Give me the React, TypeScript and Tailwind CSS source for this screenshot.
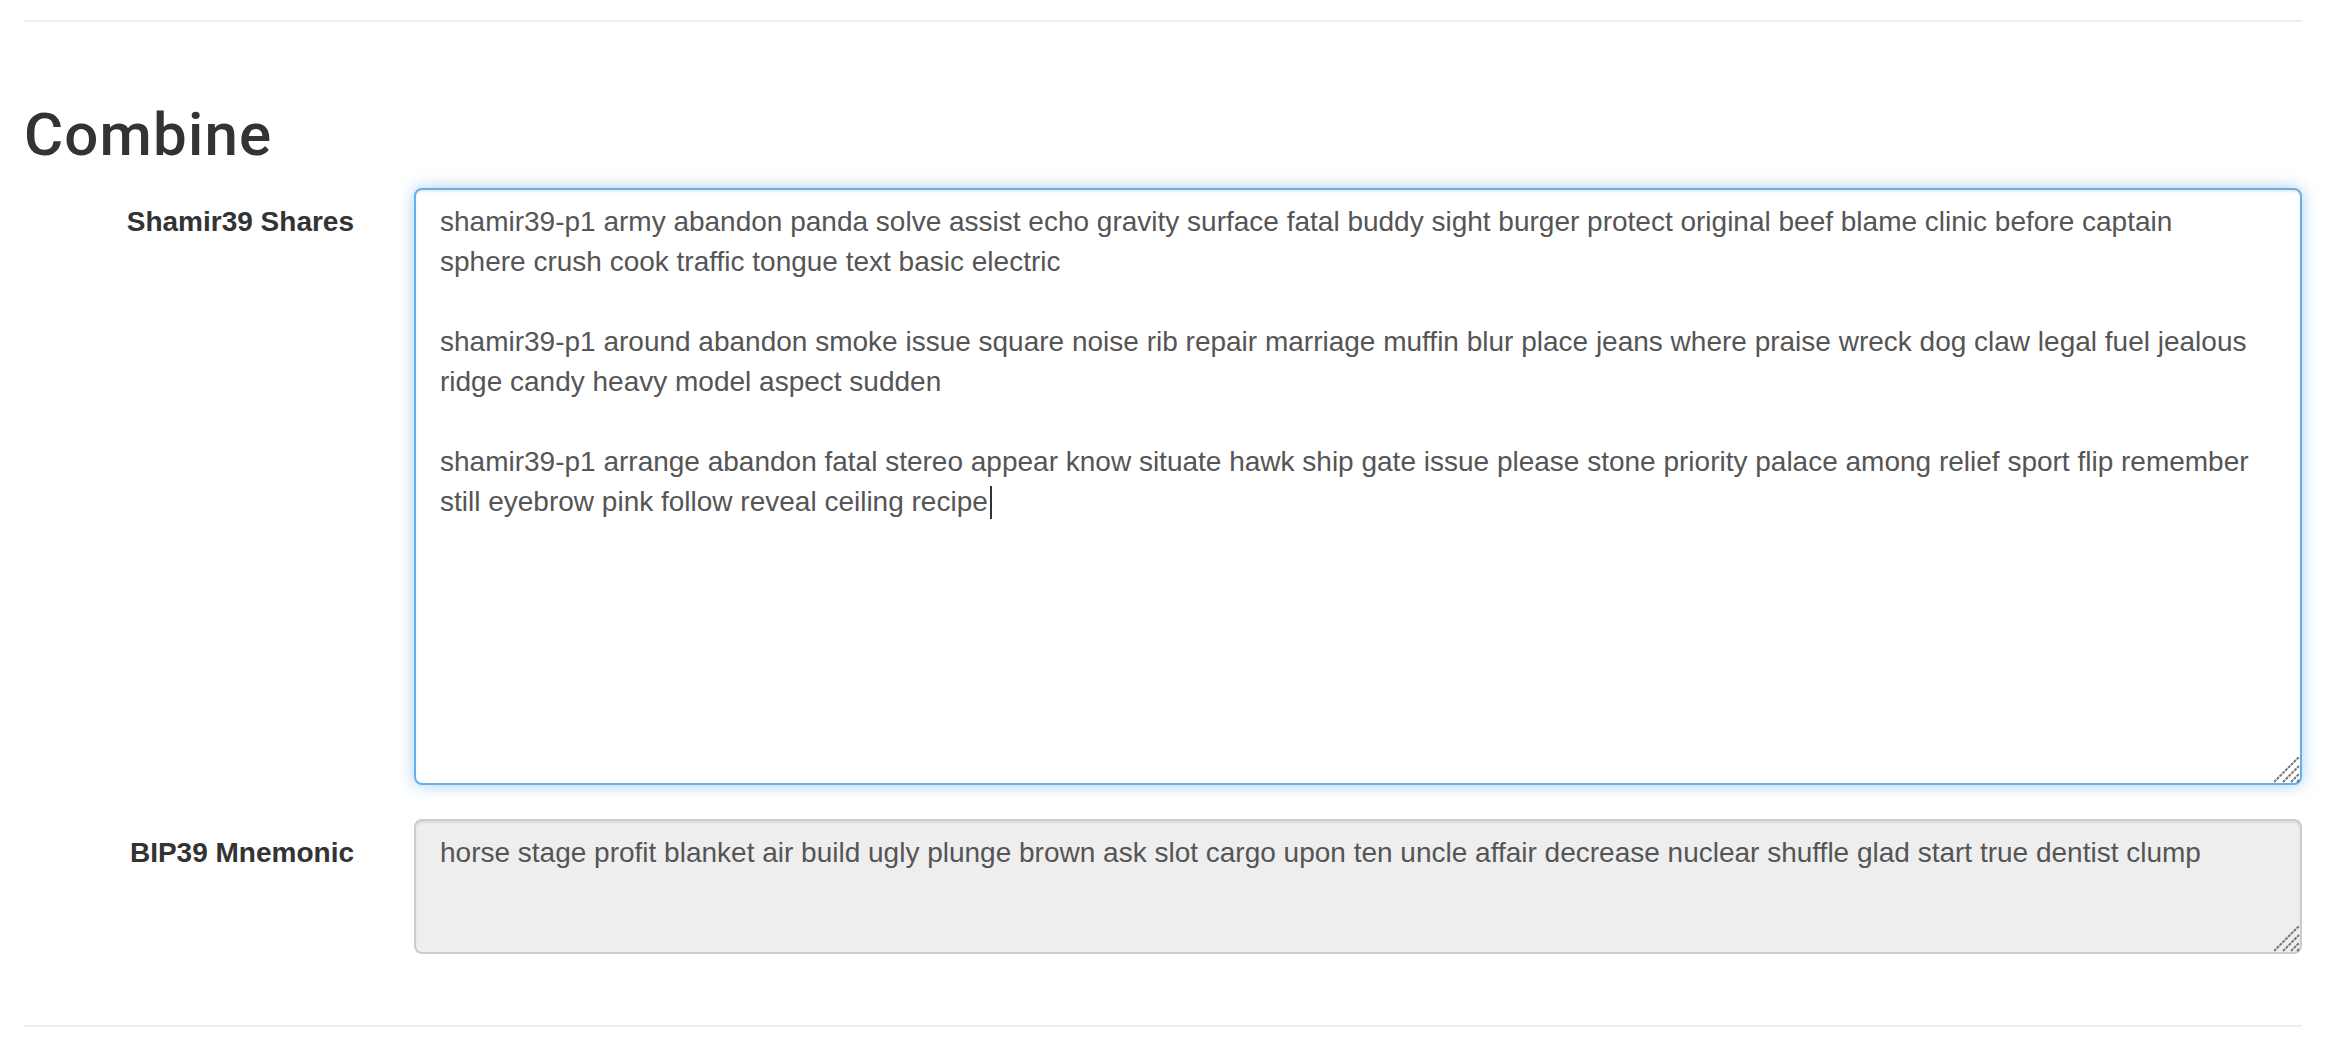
import { useEffect, useRef } from 'react';

const shares = `shamir39-p1 army abandon panda solve assist echo gravity surface fatal buddy sight burger protect original beef blame clinic before captain
sphere crush cook traffic tongue text basic electric

shamir39-p1 around abandon smoke issue square noise rib repair marriage muffin blur place jeans where praise wreck dog claw legal fuel jealous ridge candy heavy model aspect sudden

shamir39-p1 arrange abandon fatal stereo appear know situate hawk ship gate issue please stone priority palace among relief sport flip remember still eyebrow pink follow reveal ceiling recipe`;

const mnemonic =
  'horse stage profit blanket air build ugly plunge brown ask slot cargo upon ten uncle affair decrease nuclear shuffle glad start true dentist clump';

type FieldProps = {
  label: string;
  className?: string;
  children: React.ReactNode;
};

function Field({ label, className, children }: FieldProps) {
  return (
    <div className={`flex gap-[60px] ${className ?? ''}`}>
      <label className="w-[330px] shrink-0 pt-[14px] text-right font-bold text-[#333]">
        {label}
      </label>
      <div className="relative flex-1">
        {children}
        <ResizeGrip />
      </div>
    </div>
  );
}

// mac-style textarea grabber
function ResizeGrip() {
  return (
    <svg
      className="pointer-events-none absolute right-[2px] bottom-[2px]"
      width="26"
      height="26"
      viewBox="0 0 26 26"
    >
      <g stroke="#777" strokeWidth="2" strokeDasharray="3 1">
        <line x1="0" y1="25" x2="25" y2="0" />
        <line x1="9" y1="25" x2="25" y2="9" />
        <line x1="17" y1="25" x2="25" y2="17" />
        <line x1="23" y1="25" x2="25" y2="23" />
      </g>
    </svg>
  );
}

export default function App() {
  const sharesRef = useRef<HTMLTextAreaElement>(null);

  useEffect(() => {
    const el = sharesRef.current;
    if (!el) return;
    el.focus();
    el.setSelectionRange(el.value.length, el.value.length);
  }, []);

  return (
    <div className="min-h-screen bg-white px-6 font-['Liberation_Sans',Arial,sans-serif] text-[28px] leading-[40px] text-[#333]">
      <hr className="mt-5 border-t-2 border-[#eee]" />

      <h2 className="mt-[80px] mb-5 font-['Roboto','Liberation_Sans',sans-serif] text-[60px] leading-[66px] font-medium tracking-[1.2px] text-[#333]">
        Combine
      </h2>

      <Field label="Shamir39 Shares" className="mb-[34px]">
        <textarea
          ref={sharesRef}
          className="block h-[597px] w-full resize-none rounded-lg border-2 border-[#66afe9] bg-white px-6 py-3 text-[28px] leading-[40px] text-[#555] caret-transparent shadow-[inset_0_2px_2px_rgba(0,0,0,0.075),0_0_16px_rgba(102,175,233,0.6)] outline-none"
          defaultValue={shares}
          spellCheck={false}
        />
        {/* caret after "recipe" */}
        <span className="pointer-events-none absolute top-[298px] left-[576px] h-[33px] w-[2px] bg-[#333]" />
      </Field>

      <Field label="BIP39 Mnemonic">
        <textarea
          className="block h-[135px] w-full resize-none rounded-lg border-2 border-[#ccc] bg-[#eee] px-6 py-3 text-[28px] leading-[40px] text-[#555] shadow-[inset_0_2px_2px_rgba(0,0,0,0.075)] outline-none"
          value={mnemonic}
          readOnly
          spellCheck={false}
        />
      </Field>

      <hr className="mt-[71px] border-t-2 border-[#eee]" />
    </div>
  );
}
